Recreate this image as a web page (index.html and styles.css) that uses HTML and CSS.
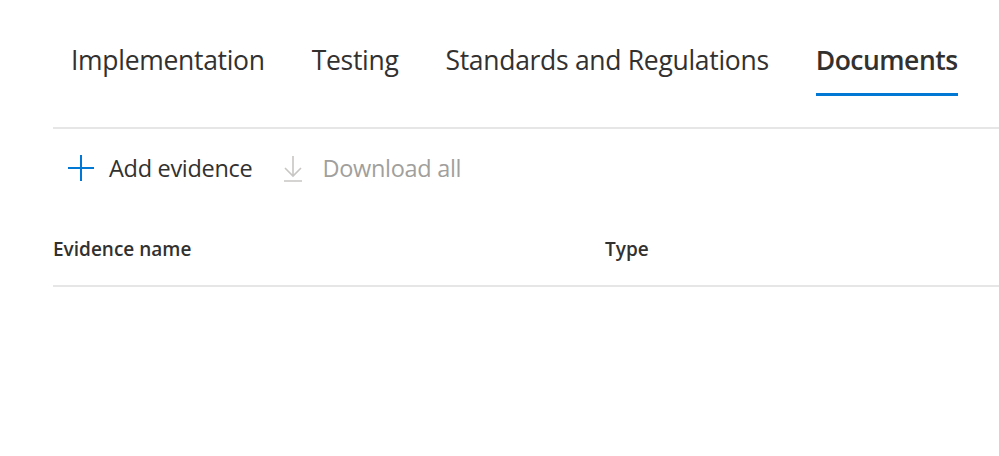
FILE: index.html
```html
<!DOCTYPE html>
<html>
<head>
<meta charset="utf-8">
<link rel="stylesheet" href="styles.css">
</head>
<body>
<div class="page">
  <nav class="tabs">
    <span class="tab">Implementation</span>
    <span class="tab">Testing</span>
    <span class="tab">Standards and Regulations</span>
    <span class="tab active">Documents</span>
  </nav>
  <div class="content">
    <div class="toolbar">
      <button class="cmd add">
        <svg class="icon" width="28" height="28" viewBox="0 0 28 28"><path d="M14 1v26M1 14h26" stroke="#0078d4" stroke-width="2" fill="none"/></svg>
        <span>Add evidence</span>
      </button>
      <button class="cmd disabled">
        <svg class="icon" width="20" height="28" viewBox="0 0 20 28"><path d="M10 2v20M2 14l8 8 8-8M1 27h18" stroke="#c8c6c4" stroke-width="1.6" fill="none"/></svg>
        <span>Download all</span>
      </button>
    </div>
    <div class="table-head">
      <div class="col name">Evidence name</div>
      <div class="col type">Type</div>
    </div>
  </div>
</div>
</body>
</html>
```
FILE: styles.css
```css
html, body { margin: 0; padding: 0; background: #fff; }
body { font-family: "Open Sans", "Noto Sans", sans-serif; color: #323130; }
.page { padding-left: 53px; }
.tabs { display: flex; gap: 47px; padding: 38px 0 0 18px; height: 58px; white-space: nowrap; }
.tab { flex-shrink: 0; font-size: 26.5px; line-height: 44px; height: 58px; box-sizing: border-box; letter-spacing: -0.3px; }
.tab.active { font-weight: 600; letter-spacing: -0.5px; border-bottom: 3px solid #0078d4; }
.content { border-top: 2px solid #e6e6e6; margin-top: 31px; }
.toolbar { display: flex; align-items: center; height: 78px; padding-left: 14px; gap: 31px; }
.cmd { display: flex; align-items: center; gap: 14px; background: none; border: 0; padding: 0; font-family: inherit; font-size: 23.5px; color: #323130; letter-spacing: -0.3px; white-space: nowrap; }
.cmd.disabled { color: #a19f9d; gap: 19px; }
.table-head { display: flex; box-sizing: border-box; height: 80px; padding-top: 6px; align-items: center; border-bottom: 2px solid #e6e6e6; font-weight: 600; font-size: 19px; }
.col.name { width: 552px; }
```
